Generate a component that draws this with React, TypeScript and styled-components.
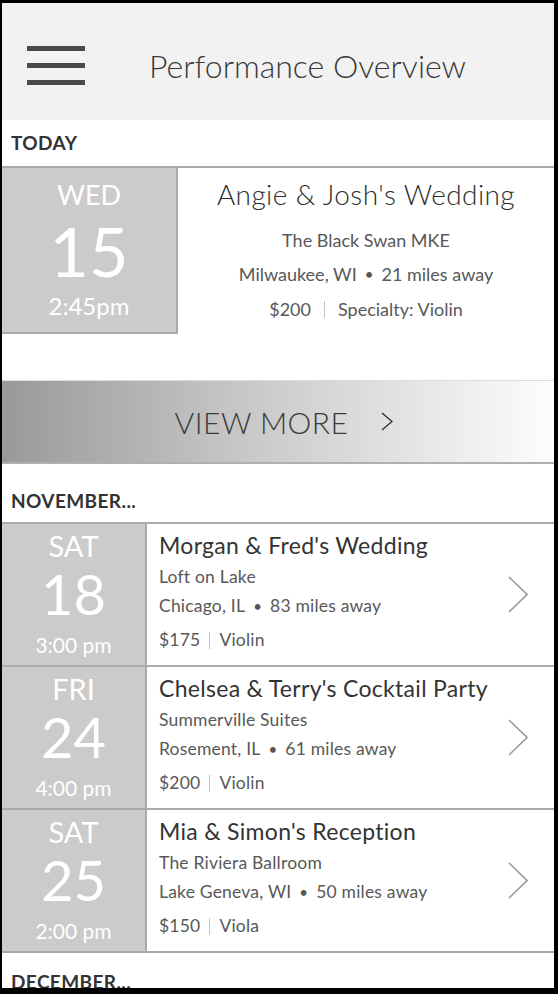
import styled, { createGlobalStyle } from 'styled-components'

const GlobalStyle = createGlobalStyle`
    html, body {
        margin: 0;
        padding: 0;
        background: #fff;
    }
    body {
        font-family: 'Lato', 'Liberation Sans', sans-serif;
    }
`

type Gig = {
    day: string
    date: string
    time: string
    title: string
    venue: string
    city: string
    miles: string
    pay: string
    part: string
}

const gigs: Gig[] = [
    {
        day: 'SAT',
        date: '18',
        time: '3:00 pm',
        title: "Morgan & Fred's Wedding",
        venue: 'Loft on Lake',
        city: 'Chicago, IL',
        miles: '83 miles away',
        pay: '$175',
        part: 'Violin',
    },
    {
        day: 'FRI',
        date: '24',
        time: '4:00 pm',
        title: "Chelsea & Terry's Cocktail Party",
        venue: 'Summerville Suites',
        city: 'Rosement, IL',
        miles: '61 miles away',
        pay: '$200',
        part: 'Violin',
    },
    {
        day: 'SAT',
        date: '25',
        time: '2:00 pm',
        title: "Mia & Simon's Reception",
        venue: 'The Riviera Ballroom',
        city: 'Lake Geneva, WI',
        miles: '50 miles away',
        pay: '$150',
        part: 'Viola',
    },
]

const Frame = styled.div`
    width: 558px;
    height: 994px;
    box-sizing: border-box;
    border-style: solid;
    border-color: #000;
    border-width: 3px 4px 6px 2px;
    overflow: hidden;
    background: #fff;
`
const Header = styled.header`
    height: 117px;
    box-sizing: border-box;
    padding: 8px 0 0 25px;
    background: #f2f2f2;
    display: flex;
    align-items: center;
`
const Burger = styled.div`
    width: 58px;
    display: flex;
    flex-direction: column;
    gap: 12px;
    span {
        display: block;
        height: 5px;
        background: #4a4a4a;
    }
`
const Title = styled.h1`
    margin: 0 0 0 64px;
    font-size: 32px;
    line-height: 40px;
    font-weight: 300;
    color: #3a3a3a;
`
const SectionLabel = styled.div<{ $top: number; $bottom: number; $line?: boolean }>`
    padding: ${(p) => p.$top}px 0 ${(p) => p.$bottom}px 9px;
    font-size: 19px;
    line-height: 24px;
    font-weight: 700;
    color: #333;
    letter-spacing: 0.4px;
    border-bottom: ${(p) => (p.$line ? '2px solid #aaa' : 'none')};
`
const TodayCard = styled.div`
    display: flex;
    height: 212px;
`
const TodayDate = styled.div`
    width: 176px;
    height: 166px;
    background: #cbcbcb;
    border-right: 2px solid #a9a9a9;
    border-bottom: 2px solid #a9a9a9;
    display: flex;
    flex-direction: column;
    align-items: center;
    color: #fff;
    padding-top: 12px;
    box-sizing: border-box;
`
const DateText = styled.div<{ $size: number; $lh: number; $gap?: number }>`
    font-size: ${(p) => p.$size}px;
    line-height: ${(p) => p.$lh}px;
    margin-top: ${(p) => p.$gap ?? 0}px;
    font-weight: 400;
`
const TodayInfo = styled.div`
    flex: 1;
    display: flex;
    flex-direction: column;
    align-items: center;
    color: #585858;
    padding-top: 9px;
`
const TodayTitle = styled.div`
    font-size: 28px;
    line-height: 34px;
    font-weight: 300;
    color: #2e2e2e;
    letter-spacing: 0.4px;
`
const TodayLine = styled.div<{ $gap: number }>`
    font-size: 18px;
    line-height: 24px;
    margin-top: ${(p) => p.$gap}px;
    display: flex;
    align-items: center;
`
const Dot = styled.span`
    margin: 0 8px;
    font-size: 15px;
    color: #555;
`
const Bar = styled.span<{ $space: number }>`
    display: inline-block;
    width: 1px;
    height: 17px;
    background: #c4c4c4;
    margin: 0 ${(p) => p.$space}px;
`
const ViewMore = styled.div`
    height: 84px;
    box-sizing: border-box;
    border-top: 1px solid #dcdcdc;
    border-bottom: 2px solid #b0b0b0;
    background: linear-gradient(90deg, #999 0%, #c9c9c9 45%, #fdfdfd 100%);
    display: flex;
    align-items: center;
    justify-content: center;
    padding-left: 12px;
    color: #3a3a3a;
`
const ViewMoreText = styled.span`
    font-size: 30px;
    line-height: 40px;
    font-weight: 300;
    letter-spacing: 0.5px;
    margin-right: 33px;
`
const Row = styled.div`
    display: flex;
    height: 143px;
    box-sizing: border-box;
    border-bottom: 2px solid #aaa;
`
const RowDate = styled.div`
    width: 145px;
    background: #cbcbcb;
    border-right: 2px solid #a9a9a9;
    box-sizing: border-box;
    display: flex;
    flex-direction: column;
    align-items: center;
    color: #fff;
    padding-top: 5px;
`
const RowBody = styled.div`
    flex: 1;
    display: flex;
    align-items: center;
    padding: 0 26px 0 12px;
`
const RowText = styled.div`
    flex: 1;
    align-self: flex-start;
    padding-top: 7px;
    color: #585858;
`
const RowTitle = styled.div`
    font-size: 23px;
    line-height: 28px;
    color: #333;
    letter-spacing: 0.3px;
`
const RowLine = styled.div<{ $gap: number }>`
    font-size: 17.5px;
    line-height: 24px;
    letter-spacing: 0.2px;
    margin-top: ${(p) => p.$gap}px;
    display: flex;
    align-items: center;
`

function Chevron({ w, h, color, stroke }: { w: number; h: number; color: string; stroke: number }) {
    return (
        <svg width={w} height={h} viewBox={`0 0 ${w} ${h}`} fill="none">
            <polyline
                points={`1,1 ${w - 1},${h / 2} 1,${h - 1}`}
                stroke={color}
                strokeWidth={stroke}
                strokeLinejoin="miter"
            />
        </svg>
    )
}

export default function App() {
    return (
        <Frame>
            <GlobalStyle />
            <Header>
                <Burger>
                    <span />
                    <span />
                    <span />
                </Burger>
                <Title>Performance Overview</Title>
            </Header>

            <SectionLabel $top={11} $bottom={11} $line>
                TODAY
            </SectionLabel>
            <TodayCard>
                <TodayDate>
                    <DateText $size={27} $lh={30}>WED</DateText>
                    <DateText $size={68} $lh={82}>15</DateText>
                    <DateText $size={24} $lh={28}>2:45pm</DateText>
                </TodayDate>
                <TodayInfo>
                    <TodayTitle>Angie &amp; Josh's Wedding</TodayTitle>
                    <TodayLine $gap={17}>The Black Swan MKE</TodayLine>
                    <TodayLine $gap={10}>
                        Milwaukee, WI<Dot>•</Dot>21 miles away
                    </TodayLine>
                    <TodayLine $gap={11}>
                        $200<Bar $space={13} />Specialty: Violin
                    </TodayLine>
                </TodayInfo>
            </TodayCard>

            <ViewMore>
                <ViewMoreText>VIEW MORE</ViewMoreText>
                <Chevron w={12} h={19} color="#333" stroke={1.4} />
            </ViewMore>

            <SectionLabel $top={25} $bottom={9} $line>
                NOVEMBER...
            </SectionLabel>
            {gigs.map((gig) => (
                <Row key={gig.title}>
                    <RowDate>
                        <DateText $size={29} $lh={34}>{gig.day}</DateText>
                        <DateText $size={56} $lh={62}>{gig.date}</DateText>
                        <DateText $size={21} $lh={26} $gap={7}>{gig.time}</DateText>
                    </RowDate>
                    <RowBody>
                        <RowText>
                            <RowTitle>{gig.title}</RowTitle>
                            <RowLine $gap={6}>{gig.venue}</RowLine>
                            <RowLine $gap={5}>
                                {gig.city}
                                <Dot>•</Dot>
                                {gig.miles}
                            </RowLine>
                            <RowLine $gap={10}>
                                {gig.pay}
                                <Bar $space={9} />
                                {gig.part}
                            </RowLine>
                        </RowText>
                        <Chevron w={20} h={37} color="#9a9a9a" stroke={1.6} />
                    </RowBody>
                </Row>
            ))}
            <SectionLabel $top={17} $bottom={0}>
                DECEMBER...
            </SectionLabel>
        </Frame>
    )
}
